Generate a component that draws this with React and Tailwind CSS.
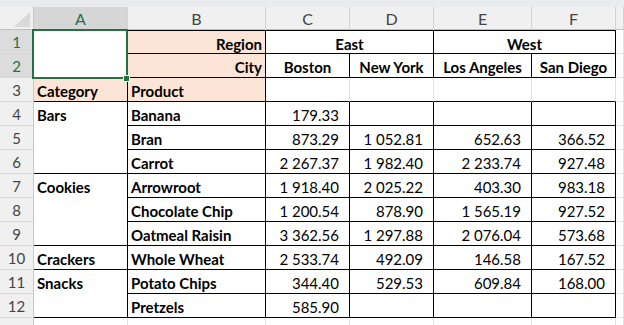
import React from "react";

const RB = { k: "border-r border-r-black", g: "border-r border-r-[#e1e1e1]", n: "" };
const BB = { k: "border-b border-b-black", g: "border-b border-b-[#e1e1e1]", n: "" };

function Cell({ text = "", align = "l", bold = false, peach = false, r = "k", b = "k", t = false, span = "" }) {
  const al = align === "r" ? "justify-end pr-[3px]" : align === "c" ? "justify-center" : align === "n" ? "justify-end pr-[10px]" : "justify-start pl-[3px]";
  return (
    <div
      className={`${RB[r]} ${BB[b]} ${t ? "border-t border-t-black" : ""} ${span} ${peach ? "bg-[#fce4d6]" : "bg-white"} overflow-hidden`}
    >
      <div className={`flex h-[23px] items-center whitespace-nowrap pt-[3px] ${al} ${bold ? "font-bold" : "font-normal"}`}>
        {text}
      </div>
    </div>
  );
}

function RowHead({ n, sel = false }) {
  return (
    <div
      className={`flex items-center justify-center border-r border-b border-r-[#c8c8c8] border-b-[#d8d8d8] pt-[2px] text-[15px] ${
        sel ? "bg-[#dcdcdc] text-[#217346]" : "bg-[#f0f0f0] text-[#444444]"
      }`}
    >
      {n}
    </div>
  );
}

function ColHead({ l, sel = false }) {
  return (
    <div
      className={`flex items-center justify-center border-r border-b border-r-[#d4d4d4] border-b-[#c0c0c0] pt-[1px] text-[16px] ${
        sel ? "bg-[#d6d6d6] text-[#217346]" : "bg-[#f0f0f0] text-[#444444]"
      }`}
    >
      {l}
    </div>
  );
}

const dataRows = [
  [4, "Bars", 3, "Banana", ["179.33", "", "", ""]],
  [5, null, 0, "Bran", ["873.29", "1\u00a0052.81", "652.63", "366.52"]],
  [6, null, 0, "Carrot", ["2\u00a0267.37", "1\u00a0982.40", "2\u00a0233.74", "927.48"]],
  [7, "Cookies", 3, "Arrowroot", ["1\u00a0918.40", "2\u00a0025.22", "403.30", "983.18"]],
  [8, null, 0, "Chocolate Chip", ["1\u00a0200.54", "878.90", "1\u00a0565.19", "927.52"]],
  [9, null, 0, "Oatmeal Raisin", ["3\u00a0362.56", "1\u00a0297.88", "2\u00a0076.04", "573.68"]],
  [10, "Crackers", 1, "Whole Wheat", ["2\u00a0533.74", "492.09", "146.58", "167.52"]],
  [11, "Snacks", 2, "Potato Chips", ["344.40", "529.53", "609.84", "168.00"]],
  [12, null, 0, "Pretzels", ["585.90", "", "", ""]],
];

export default function App() {
  return (
    <div
      className="relative h-[325px] w-[624px] overflow-hidden bg-white text-[15px] text-black"
      style={{ fontFamily: "Lato, 'Open Sans', sans-serif" }}
    >
      <div className="grid grid-cols-[34px_94px_138px_84px_84px_98px_84px_1fr] grid-rows-[7px_23px_repeat(13,24px)]">
        {/* top band */}
        <div className="col-span-8 bg-[#e9ebee]" />
        {/* column headers */}
        <div className="relative border-r border-b border-r-[#c8c8c8] border-b-[#c0c0c0] bg-[#f0f0f0]">
          <svg className="absolute left-[14px] top-[5px]" width="16" height="15" viewBox="0 0 16 15">
            <polygon points="16,0 16,15 0,15" fill="#d9d9d9" />
          </svg>
        </div>
        <ColHead l="A" sel />
        <ColHead l="B" />
        <ColHead l="C" />
        <ColHead l="D" />
        <ColHead l="E" />
        <ColHead l="F" />
        <ColHead l="" />

        {/* row 1 */}
        <RowHead n="1" sel />
        <Cell span="row-span-2" r="n" b="n" />
        <Cell text="Region" align="r" bold peach t />
        <Cell text="East" align="c" bold t span="col-span-2" />
        <Cell text="West" align="c" bold t span="col-span-2" />
        <Cell r="g" b="g" />

        {/* row 2 */}
        <RowHead n="2" sel />
        <Cell text="City" align="r" bold peach />
        <Cell text="Boston" align="c" bold />
        <Cell text="New York" align="c" bold />
        <Cell text="Los Angeles" align="c" bold />
        <Cell text="San Diego" align="c" bold />
        <Cell r="g" b="g" />

        {/* row 3 */}
        <RowHead n="3" />
        <Cell text="Category" bold peach />
        <Cell text="Product" bold peach />
        <Cell r="g" />
        <Cell r="g" />
        <Cell r="g" />
        <Cell r="g" />
        <Cell r="g" b="g" />

        {dataRows.map(([n, cat, span, prod, nums]) => (
          <React.Fragment key={n}>
            <RowHead n={String(n)} />
            {cat !== null && (
              <Cell
                text={cat}
                bold
                span={span === 3 ? "row-span-3" : span === 2 ? "row-span-2" : ""}
              />
            )}
            <Cell text={prod} bold />
            {nums.map((v, i) => (
              <Cell key={i} text={v} align="n" />
            ))}
            <Cell r="g" b="g" />
          </React.Fragment>
        ))}

        {/* row 13 (partially visible) */}
        <RowHead n="" />
        <Cell r="g" b="g" />
        <Cell r="g" b="g" />
        <Cell r="g" b="g" />
        <Cell r="g" b="g" />
        <Cell r="g" b="g" />
        <Cell r="g" b="g" />
        <Cell r="g" b="g" />
      </div>

      {/* selection overlay */}
      <div className="pointer-events-none absolute left-[32px] top-[29px] h-[50px] w-[96px] border-2 border-[#217346]" />
      <div className="pointer-events-none absolute left-[123px] top-[75px] h-[7px] w-[7px] border border-white bg-[#217346]" />
    </div>
  );
}
